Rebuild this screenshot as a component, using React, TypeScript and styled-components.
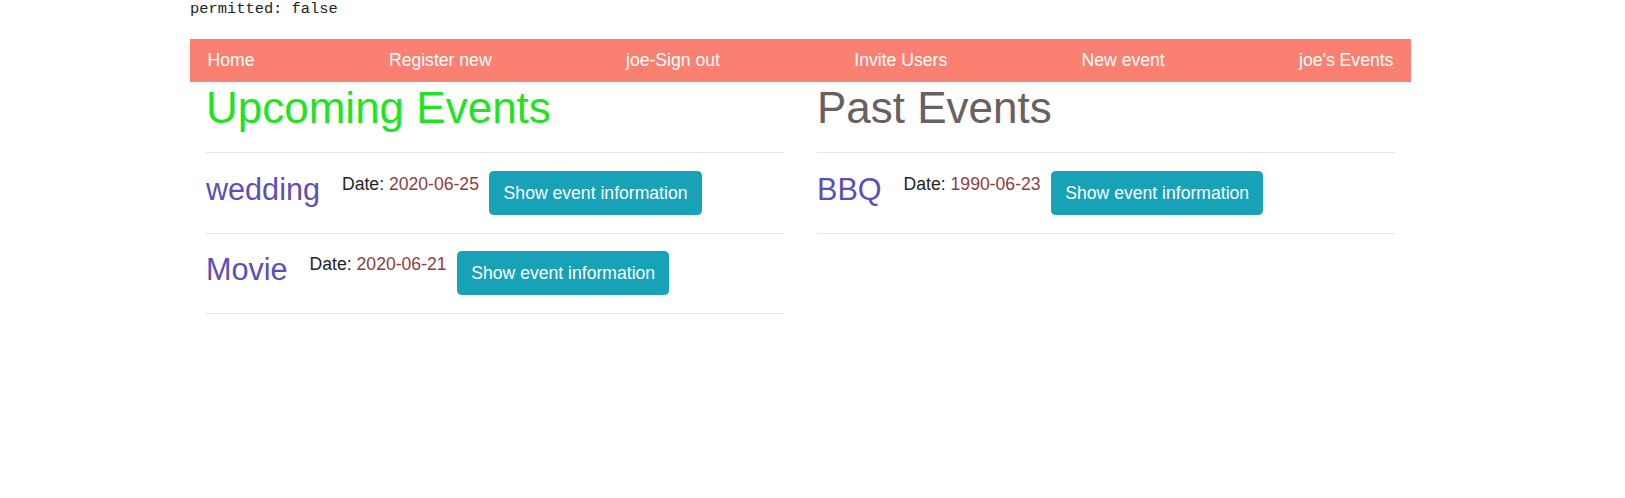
import React from 'react';
import styled, { createGlobalStyle } from 'styled-components';

const GlobalStyle = createGlobalStyle`
  html, body {
    margin: 0;
    padding: 0;
    background: #ffffff;
  }

  body {
    font-family: "Liberation Sans", Arial, sans-serif;
    font-size: 17.6px;
    line-height: 1.5;
    color: #212529;
  }
`;

const Page = styled.div`
  width: 1221px;
  margin-left: 190px;
`;

const Permit = styled.pre`
  margin: 0 0 21px;
  font-family: "Liberation Mono", "Courier New", monospace;
  font-size: 15.4px;
  line-height: 18px;
  color: #212529;
`;

const NavBar = styled.nav`
  display: flex;
  justify-content: space-between;
  align-items: center;
  height: 43px;
  padding: 0 17.6px;
  background: #fa8072;
`;

const NavLink = styled.a`
  color: #ffffff;
  text-decoration: none;
  font-size: 17.6px;
  line-height: 26.4px;
`;

const Columns = styled.div`
  display: grid;
  grid-template-columns: 1fr 1fr;
  column-gap: 33px;
  padding: 0 16px 0 16px;
`;

const Column = styled.section``;

const Heading = styled.h1<{ $color: string }>`
  margin: 0;
  font-size: 44px;
  font-weight: 400;
  line-height: 1.2;
  color: ${({ $color }) => $color};
`;

const Rule = styled.hr`
  margin: 17.6px 0;
  border: 0;
  border-top: 1px solid rgba(0, 0, 0, 0.1);
`;

const EventRow = styled.div`
  display: flex;
  align-items: flex-start;
  height: 44px;
`;

const EventName = styled.h3`
  margin: 0 22px 0 0;
  font-size: 30.6px;
  font-weight: 400;
  line-height: 1.2;
  color: #5d4fb6;
`;

const EventDate = styled.div`
  margin-right: 10.5px;
  line-height: 26.4px;
`;

const DateValue = styled.span`
  color: #8f3d3d;
`;

const InfoButton = styled.button`
  font-family: inherit;
  font-size: 17.6px;
  line-height: 26.4px;
  padding: 7.7px 13.2px;
  color: #ffffff;
  background: #17a2b8;
  border: 1.1px solid #17a2b8;
  border-radius: 4.4px;
  cursor: pointer;
`;

type EventItem = { name: string; date: string };

const upcoming: EventItem[] = [
  { name: 'wedding', date: '2020-06-25' },
  { name: 'Movie', date: '2020-06-21' },
];

const past: EventItem[] = [{ name: 'BBQ', date: '1990-06-23' }];

const links = ['Home', 'Register new', 'joe-Sign out', 'Invite Users', 'New event', "joe's Events"];

const EventList: React.FC<{ events: EventItem[] }> = ({ events }) => (
  <>
    <Rule />
    {events.map(event => (
      <React.Fragment key={event.name}>
        <EventRow>
          <EventName>{event.name}</EventName>
          <EventDate>
            Date: <DateValue>{event.date}</DateValue>
          </EventDate>
          <InfoButton>Show event information</InfoButton>
        </EventRow>
        <Rule />
      </React.Fragment>
    ))}
  </>
);

const App: React.FC = () => (
  <>
    <GlobalStyle />
    <Page>
      <Permit>permitted: false</Permit>
      <NavBar>
        {links.map(link => (
          <NavLink key={link} href="#">
            {link}
          </NavLink>
        ))}
      </NavBar>
      <Columns>
        <Column>
          <Heading $color="#1ee51e">Upcoming Events</Heading>
          <EventList events={upcoming} />
        </Column>
        <Column>
          <Heading $color="#6b5f5f">Past Events</Heading>
          <EventList events={past} />
        </Column>
      </Columns>
    </Page>
  </>
);

export default App;
